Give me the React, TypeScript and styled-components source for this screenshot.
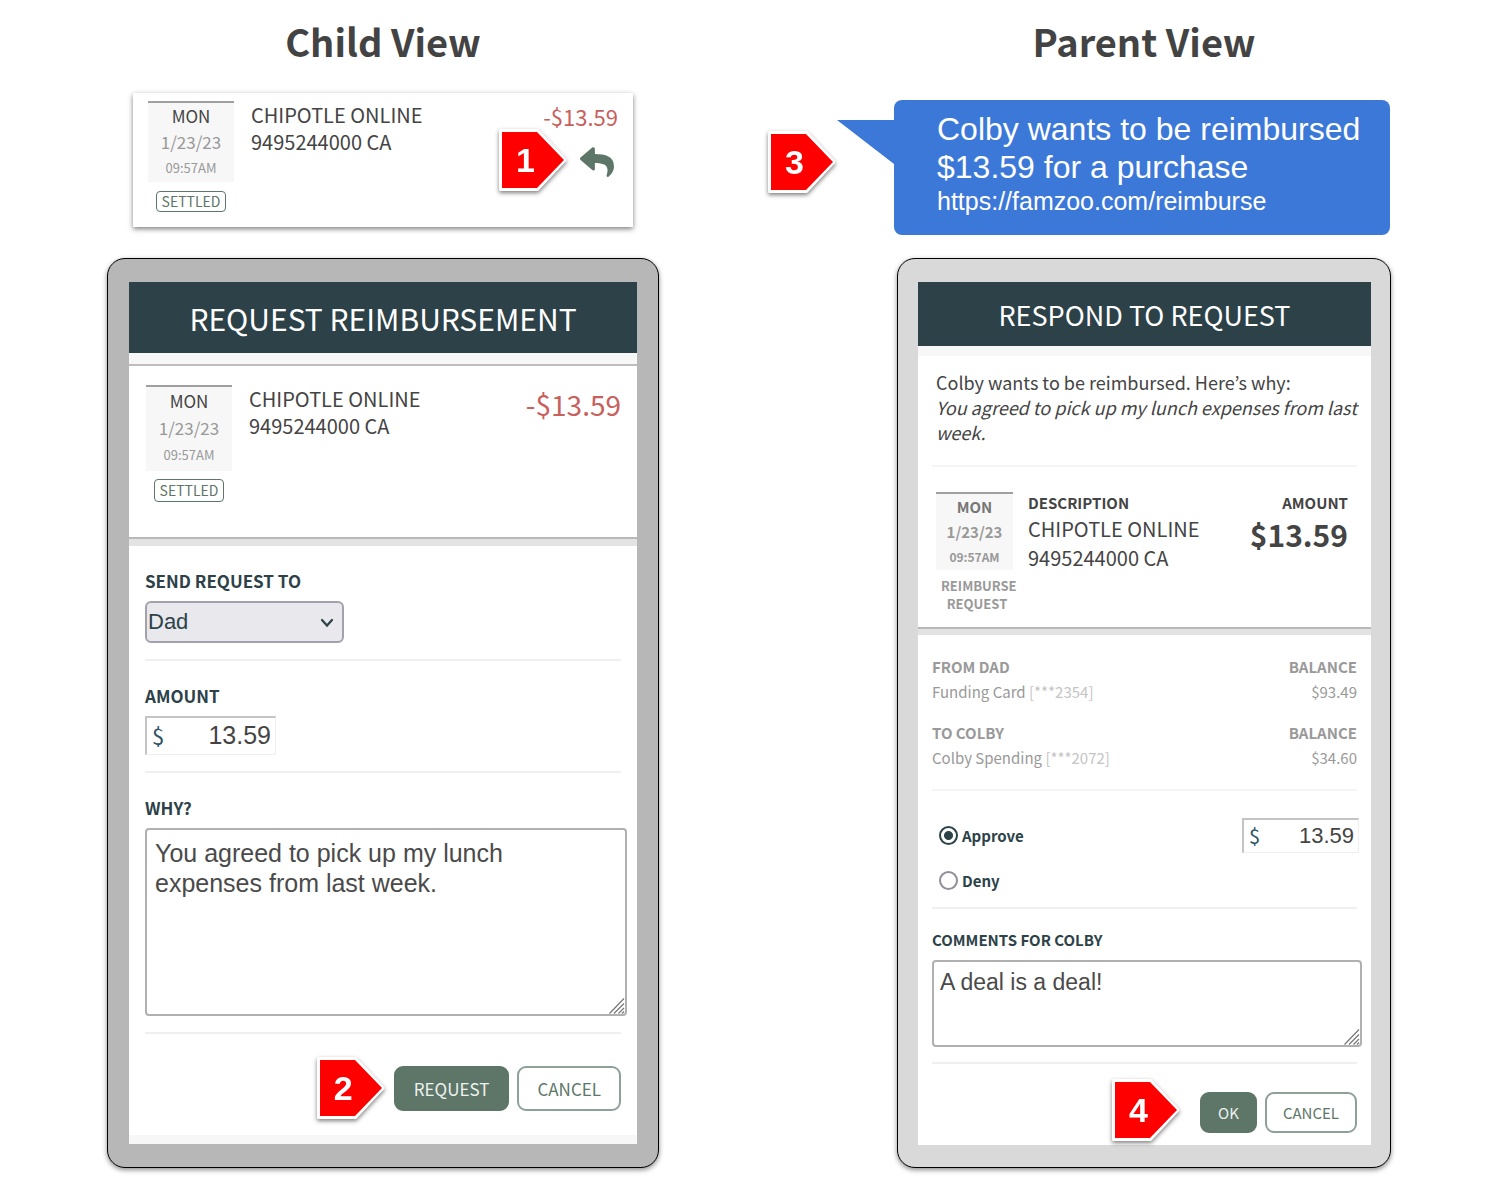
import React from "react";
import styled, { createGlobalStyle } from "styled-components";
import { FaReply } from "react-icons/fa";

const sans = '"Source Sans Pro", "Noto Sans CJK KR", sans-serif';
const arial = '"Liberation Sans", Arial, sans-serif';
const green = "#5d7668";
const ink = "#2c4248";

type Size = "lg" | "sm";

const GlobalStyle = createGlobalStyle`
  *, *::before, *::after { box-sizing: border-box; }
  body { margin: 0; background: #fff; font-family: ${sans}; color: #444; }
  button, input, select, textarea { font: inherit; margin: 0; }
`;

/* ---------- page ---------- */

const Page = styled.main`
  display: grid;
  grid-template-columns: 552fr 494fr;
  column-gap: 238px;
  padding: 14px 109px 32px 107px;
`;

const Column = styled.section`
  display: flex;
  flex-direction: column;
`;

const Title = styled.h1`
  margin: 0;
  font-size: 38px;
  line-height: 54px;
  font-weight: 700;
  text-align: center;
  color: #434343;
`;

const Teaser = styled.div`
  height: 190px;
  display: flex;
  flex-direction: column;
`;

/* ---------- numbered callouts ---------- */

const MarkerBox = styled.span<{ $gap: number; $lift: number }>`
  position: absolute;
  right: calc(100% + ${(p) => p.$gap}px);
  top: 50%;
  width: 68px;
  height: 62px;
  margin-top: ${(p) => -31 - p.$lift}px;
  filter: drop-shadow(0 2px 2px rgba(0, 0, 0, 0.5));
`;

const MarkerShape = styled.svg`
  display: block;
  width: 100%;
  height: 100%;
`;

const MarkerNumber = styled.span`
  position: absolute;
  inset: 0 15px 0 0;
  display: grid;
  place-items: center;
  font: 700 34px/62px ${arial};
  color: #fff;
`;

function Marker({ n, gap, lift }: { n: number; gap: number; lift: number }) {
  return (
    <MarkerBox $gap={gap} $lift={lift}>
      <MarkerShape viewBox="0 0 68 62" aria-hidden="true">
        <path
          d="M1.500 1.500H38.500L66 31L38.500 60.500H1.500Z"
          fill="#fff"
          stroke="#fff"
          strokeWidth="3"
          strokeLinejoin="round"
        />
        <path d="M3 3H38L65 31L38 59H3Z" fill="#f00" />
      </MarkerShape>
      <MarkerNumber>{n}</MarkerNumber>
    </MarkerBox>
  );
}

const Anchor = styled.div`
  position: relative;
  display: flex;
`;

/* ---------- transaction ---------- */

const Card = styled.article`
  display: flex;
  margin: 25px 26px 0;
  padding: 8px 15px 15px;
  background: #fff;
  box-shadow: 0 2px 5px rgba(0, 0, 0, 0.5);
`;

const DateColumn = styled.div<{ $narrow?: boolean }>`
  flex: none;
  display: flex;
  flex-direction: column;
  align-items: center;
  width: ${(p) => (p.$narrow ? 77 : 86)}px;
`;

const DateTile = styled.time<{ $line: number; $bold?: boolean; $end?: number }>`
  display: flex;
  flex-direction: column;
  align-self: stretch;
  padding-bottom: ${(p) => p.$end ?? 1}px;
  border-top: 2px solid #a0a0a0;
  background: #f7f7f7;
  text-align: center;
  font-size: ${(p) => (p.$bold ? 15 : 17)}px;
  line-height: ${(p) => p.$line}px;
  font-weight: ${(p) => (p.$bold ? 700 : 400)};
  color: #999;
`;

const Weekday = styled.span<{ $soft?: boolean }>`
  color: ${(p) => (p.$soft ? "#777" : "#444")};
`;

const Clock = styled.span<{ $size: number }>`
  font-size: ${(p) => p.$size}px;
`;

function DateBlock({ line, bold, end }: { line: number; bold?: boolean; end?: number }) {
  return (
    <DateTile $line={line} $bold={bold} $end={end} dateTime="2023-01-23T09:57">
      <Weekday $soft={bold}>MON</Weekday>
      <span>1/23/23</span>
      <Clock $size={bold ? 12 : 13}>09:57AM</Clock>
    </DateTile>
  );
}

const Badge = styled.span<{ $size: Size }>`
  margin-top: ${(p) => (p.$size === "lg" ? 8 : 9)}px;
  padding: 0 5px;
  border: 1px solid ${green};
  border-radius: 4px;
  font-size: 14px;
  line-height: ${(p) => (p.$size === "lg" ? 21 : 19)}px;
  color: ${green};
`;

const Merchant = styled.p<{ $line?: number }>`
  margin: 0;
  font-size: 20px;
  line-height: ${(p) => p.$line ?? 27}px;
`;

const Details = styled.div`
  flex: 1;
  padding-left: 17px;
`;

const AmountColumn = styled.div`
  display: flex;
  flex-direction: column;
  align-items: flex-end;
`;

const Spent = styled.span<{ $size: Size }>`
  font-size: ${(p) => (p.$size === "lg" ? 28 : 22)}px;
  line-height: ${(p) => (p.$size === "lg" ? 38 : 30)}px;
  color: #c9605d;
`;

const ReplyButton = styled.button`
  display: flex;
  margin: 14px 4px 0 0;
  padding: 0;
  border: 0;
  background: none;
  color: ${green};
  font-size: 34px;
  cursor: pointer;
`;

/* ---------- text message ---------- */

const Bubble = styled.aside`
  position: relative;
  margin: 32px 1px 0 -3px;
  padding: 10px 20px 18px 43px;
  border-radius: 8px;
  background: #3c78d8;
  color: #fff;
  font: 32px/38px ${arial};
`;

const Tail = styled.svg`
  position: absolute;
  right: 100%;
  top: 20px;
  width: 57px;
  height: 44px;
`;

const BubbleText = styled.p`
  margin: 0;
`;

const BubbleLink = styled.a`
  display: block;
  font-size: 25px;
  line-height: 31px;
  color: inherit;
  text-decoration: none;
`;

/* ---------- phone ---------- */

const Phone = styled.div<{ $size: Size }>`
  padding: ${(p) => (p.$size === "lg" ? "23px 21px 23px" : "23px 19px 22px 20px")};
  border: 1px solid #000;
  border-radius: 18px;
  background: ${(p) => (p.$size === "lg" ? "#b7b7b7" : "#d9d9d9")};
  box-shadow: 0 2px 5px rgba(0, 0, 0, 0.45);
`;

const Screen = styled.div`
  background: #fff;
`;

const Header = styled.h2<{ $size: Size }>`
  margin: 0;
  padding-top: 2px;
  font-weight: 400;
  font-size: ${(p) => (p.$size === "lg" ? 30 : 27)}px;
  line-height: ${(p) => (p.$size === "lg" ? 69 : 62)}px;
  text-align: center;
  color: #fff;
  background: #2c4148;
`;

const Strip = styled.div<{ $height: number }>`
  height: ${(p) => p.$height}px;
  background: #f7f7f7;
`;

const Transaction = styled.section`
  display: flex;
  padding: 19px 16px 35px 17px;
  border-top: 2px solid #bdbdbd;
`;

const Divider = styled.div<{ $size: Size }>`
  height: ${(p) => (p.$size === "lg" ? 9 : 8)}px;
  border-top: 2px solid #b8b8b8;
  background: #e3e3e3;
`;

const Form = styled.form<{ $size: Size }>`
  display: flex;
  flex-direction: column;
  padding: ${(p) => (p.$size === "lg" ? "0 16px 24px" : "0 14px 12px")};
`;

const Field = styled.div<{ $size: Size }>`
  display: flex;
  flex-direction: column;
  align-items: flex-start;
  gap: 8px;
  padding: ${(p) => (p.$size === "lg" ? "23px 0 16px" : "19px 0 15px")};
  border-bottom: 2px solid #efefef;
`;

const Label = styled.label<{ $size: Size }>`
  font-size: ${(p) => (p.$size === "lg" ? 17 : 15)}px;
  line-height: 24px;
  font-weight: 700;
  color: ${ink};
`;

const SelectWrap = styled.div`
  position: relative;
  width: 199px;
`;

const Select = styled.select`
  display: block;
  width: 100%;
  height: 42px;
  padding: 0 30px 0 1px;
  appearance: none;
  border: 2px solid #a3a1ae;
  border-radius: 6px;
  background: #e9e8ed;
  font: 22px/30px ${arial};
  color: ${ink};
`;

const Chevron = styled.svg`
  position: absolute;
  right: 9px;
  top: 16px;
  width: 16px;
  height: 12px;
  pointer-events: none;
`;

const MoneyBox = styled.div<{ $size: Size }>`
  display: flex;
  align-items: center;
  width: ${(p) => (p.$size === "lg" ? 131 : 117)}px;
  height: ${(p) => (p.$size === "lg" ? 39 : 35)}px;
  padding: ${(p) => (p.$size === "lg" ? "0 4px 2px 5px" : "0 4px 0 5px")};
  border: 1px solid #efefef;
  border-top: 2px solid #c4c4c4;
  border-left: 2px solid #c4c4c4;
  font-size: ${(p) => (p.$size === "lg" ? 22 : 20)}px;
  line-height: 30px;
  color: #2c5366;
`;

const MoneyInput = styled.input<{ $size: Size }>`
  flex: 1;
  min-width: 0;
  padding: 0;
  border: 0;
  background: none;
  text-align: right;
  font: ${(p) => (p.$size === "lg" ? 25 : 22)}px/30px ${arial};
  color: #444;
`;

function Money({ id, size, label }: { id: string; size: Size; label?: string }) {
  return (
    <MoneyBox $size={size}>
      $
      <MoneyInput id={id} $size={size} aria-label={label} defaultValue="13.59" />
    </MoneyBox>
  );
}

const AreaWrap = styled.div<{ $size: Size }>`
  position: relative;
  height: ${(p) => (p.$size === "lg" ? 188 : 87)}px;
  width: calc(100% + ${(p) => (p.$size === "lg" ? 6 : 5)}px);
`;

const Area = styled.textarea<{ $size: Size }>`
  display: block;
  width: 100%;
  height: 100%;
  padding: ${(p) => (p.$size === "lg" ? "8px 100px 8px 8px" : "5px 6px")};
  border: 2px solid #b0b0b0;
  border-radius: 4px;
  resize: none;
  font: ${(p) => (p.$size === "lg" ? 25 : 23)}px/30px ${arial};
  color: #4a4a4a;
`;

const Grip = styled.svg`
  position: absolute;
  right: 2px;
  bottom: 2px;
  width: 16px;
  height: 16px;
`;

function TextBox({ id, size, text }: { id: string; size: Size; text: string }) {
  return (
    <AreaWrap $size={size}>
      <Area id={id} $size={size} defaultValue={text} />
      <Grip viewBox="0 0 16 16" aria-hidden="true" stroke="#777" strokeWidth="1.200">
        <path d="M0.500 15.500L15 0.500M5 15.500L15 5.500M9.500 15.500L15 10M13 15.500L15 13.500" />
      </Grip>
    </AreaWrap>
  );
}

const Actions = styled.div<{ $size: Size }>`
  display: flex;
  justify-content: flex-end;
  gap: 8px;
  padding-top: ${(p) => (p.$size === "lg" ? 32 : 28)}px;
`;

const Button = styled.button<{ $size: Size; $primary?: boolean }>`
  height: ${(p) => (p.$size === "lg" ? 45 : 41)}px;
  padding: 0 ${(p) => (p.$size === "lg" ? 18 : 16)}px;
  border: 2px solid ${(p) => (p.$primary ? green : "#8fa197")};
  border-radius: 9px;
  background: ${(p) => (p.$primary ? green : "#fff")};
  color: ${(p) => (p.$primary ? "#eef2ef" : green)};
  font-size: ${(p) => (p.$size === "lg" ? 17 : 15)}px;
  line-height: 24px;
  cursor: pointer;
`;

/* ---------- parent screen ---------- */

const Body = styled.div`
  padding: 0 14px;
`;

const Message = styled.p`
  margin: 0;
  padding: 14px 0 20px 4px;
  border-bottom: 2px solid #f5f5f5;
  font-size: 18px;
  line-height: 25px;
`;

const Reason = styled.em`
  display: block;
`;

const Request = styled.section`
  display: flex;
  padding: 25px 9px 14px 4px;
`;

const Kind = styled.span`
  width: 77px;
  margin-top: 7px;
  padding-left: 5px;
  font-size: 13px;
  line-height: 18px;
  font-weight: 700;
  text-align: center;
  color: #999;
`;

const Caption = styled.h3`
  margin: 0;
  font-size: 15px;
  line-height: 22px;
  font-weight: 700;
`;

const RequestDetails = styled.div`
  flex: 1;
  padding-left: 15px;
`;

const Total = styled.strong`
  font-size: 30px;
  line-height: 40px;
`;

const Accounts = styled.table`
  width: 100%;
  margin-top: 19px;
  border-collapse: collapse;
  font-size: 15px;
  line-height: 25px;
  color: #999;

  th, td { padding: 0; text-align: left; }
  th:last-child, td:last-child { text-align: right; }
`;

const AccountRows = styled.tbody`
  & + & tr:first-child > th { padding-top: 16px; }
`;

const CardNumber = styled.span`
  color: #c4c4c4;
`;

const Decision = styled.div`
  display: flex;
  flex-direction: column;
  gap: 10px;
  margin-top: 19px;
  padding: 27px 0 9px 7px;
  border-top: 2px solid #f5f5f5;
  border-bottom: 2px solid #efefef;
`;

const Choice = styled.div`
  display: flex;
  align-items: center;
  justify-content: space-between;
  height: 35px;
  margin-right: -2px;
`;

const ChoiceLabel = styled.label`
  display: flex;
  align-items: center;
  gap: 4px;
  font-size: 15px;
  line-height: 24px;
  font-weight: 700;
  color: ${ink};
`;

const Radio = styled.input`
  appearance: none;
  width: 19px;
  height: 19px;
  border: 2px solid #8f8f9d;
  border-radius: 50%;
  background: #fff;

  &:checked {
    border-color: ${ink};
    background: radial-gradient(circle, ${ink} 0 4px, #fff 5px);
  }
`;

export default function App() {
  return (
    <>
      <GlobalStyle />
      <Page>
        <Column>
          <Title>Child View</Title>
          <Teaser>
            <Card>
              <DateColumn>
                <DateBlock line={26} />
                <Badge $size="sm">SETTLED</Badge>
              </DateColumn>
              <Details>
                <Merchant>CHIPOTLE ONLINE<br />9495244000 CA</Merchant>
              </Details>
              <AmountColumn>
                <Spent $size="sm">-$13.59</Spent>
                <Anchor>
                  <Marker n={1} gap={13} lift={-5} />
                  <ReplyButton type="button" aria-label="Request reimbursement">
                    <FaReply />
                  </ReplyButton>
                </Anchor>
              </AmountColumn>
            </Card>
          </Teaser>
          <Phone $size="lg">
            <Screen>
              <Header $size="lg">REQUEST REIMBURSEMENT</Header>
              <Strip $height={11} />
              <Transaction>
                <DateColumn>
                  <DateBlock line={27} end={3} />
                  <Badge $size="lg">SETTLED</Badge>
                </DateColumn>
                <Details>
                  <Merchant>CHIPOTLE ONLINE<br />9495244000 CA</Merchant>
                </Details>
                <Spent $size="lg">-$13.59</Spent>
              </Transaction>
              <Divider $size="lg" />
              <Form $size="lg" onSubmit={(e) => e.preventDefault()}>
                <Field $size="lg">
                  <Label $size="lg" htmlFor="recipient">SEND REQUEST TO</Label>
                  <SelectWrap>
                    <Select id="recipient" defaultValue="Dad">
                      <option>Dad</option>
                    </Select>
                    <Chevron viewBox="0 0 16 12" aria-hidden="true">
                      <path d="M3 3L8 8.500L13 3" fill="none" stroke={ink} strokeWidth="2.200" strokeLinecap="round" />
                    </Chevron>
                  </SelectWrap>
                </Field>
                <Field $size="lg">
                  <Label $size="lg" htmlFor="amount">AMOUNT</Label>
                  <Money id="amount" size="lg" />
                </Field>
                <Field $size="lg">
                  <Label $size="lg" htmlFor="why">WHY?</Label>
                  <TextBox id="why" size="lg" text="You agreed to pick up my lunch expenses from last week." />
                </Field>
                <Actions $size="lg">
                  <Anchor>
                    <Marker n={2} gap={9} lift={1} />
                    <Button $size="lg" $primary type="submit">REQUEST</Button>
                  </Anchor>
                  <Button $size="lg" type="button">CANCEL</Button>
                </Actions>
              </Form>
              <Strip $height={9} />
            </Screen>
          </Phone>
        </Column>

        <Column>
          <Title>Parent View</Title>
          <Teaser>
            <Bubble>
              <Tail viewBox="0 0 57 44" aria-hidden="true">
                <path d="M0 0H57V44Z" fill="#3c78d8" />
              </Tail>
              <Marker n={3} gap={58} lift={6} />
              <BubbleText>Colby wants to be reimbursed $13.59 for a purchase</BubbleText>
              <BubbleLink href="https://famzoo.com/reimburse">https://famzoo.com/reimburse</BubbleLink>
            </Bubble>
          </Teaser>
          <Phone $size="sm">
            <Screen>
              <Header $size="sm">RESPOND TO REQUEST</Header>
              <Strip $height={10} />
              <Body>
                <Message>
                  Colby wants to be reimbursed. Here’s why:
                  <Reason>You agreed to pick up my lunch expenses from last week.</Reason>
                </Message>
                <Request>
                  <DateColumn $narrow>
                    <DateBlock line={25} bold />
                    <Kind>REIMBURSE REQUEST</Kind>
                  </DateColumn>
                  <RequestDetails>
                    <Caption>DESCRIPTION</Caption>
                    <Merchant $line={29}>CHIPOTLE ONLINE<br />9495244000 CA</Merchant>
                  </RequestDetails>
                  <AmountColumn>
                    <Caption>AMOUNT</Caption>
                    <Total>$13.59</Total>
                  </AmountColumn>
                </Request>
              </Body>
              <Divider $size="sm" />
              <Form $size="sm" onSubmit={(e) => e.preventDefault()}>
                <Accounts>
                  <AccountRows>
                    <tr><th>FROM DAD</th><th>BALANCE</th></tr>
                    <tr><td>Funding Card <CardNumber>[***2354]</CardNumber></td><td>$93.49</td></tr>
                  </AccountRows>
                  <AccountRows>
                    <tr><th>TO COLBY</th><th>BALANCE</th></tr>
                    <tr><td>Colby Spending <CardNumber>[***2072]</CardNumber></td><td>$34.60</td></tr>
                  </AccountRows>
                </Accounts>
                <Decision>
                  <Choice>
                    <ChoiceLabel>
                      <Radio type="radio" name="decision" defaultChecked />
                      Approve
                    </ChoiceLabel>
                    <Money id="approved" size="sm" label="Approved amount" />
                  </Choice>
                  <Choice>
                    <ChoiceLabel>
                      <Radio type="radio" name="decision" />
                      Deny
                    </ChoiceLabel>
                  </Choice>
                </Decision>
                <Field $size="sm">
                  <Label $size="sm" htmlFor="comments">COMMENTS FOR COLBY</Label>
                  <TextBox id="comments" size="sm" text="A deal is a deal!" />
                </Field>
                <Actions $size="sm">
                  <Anchor>
                    <Marker n={4} gap={20} lift={3} />
                    <Button $size="sm" $primary type="submit">OK</Button>
                  </Anchor>
                  <Button $size="sm" type="button">CANCEL</Button>
                </Actions>
              </Form>
            </Screen>
          </Phone>
        </Column>
      </Page>
    </>
  );
}
